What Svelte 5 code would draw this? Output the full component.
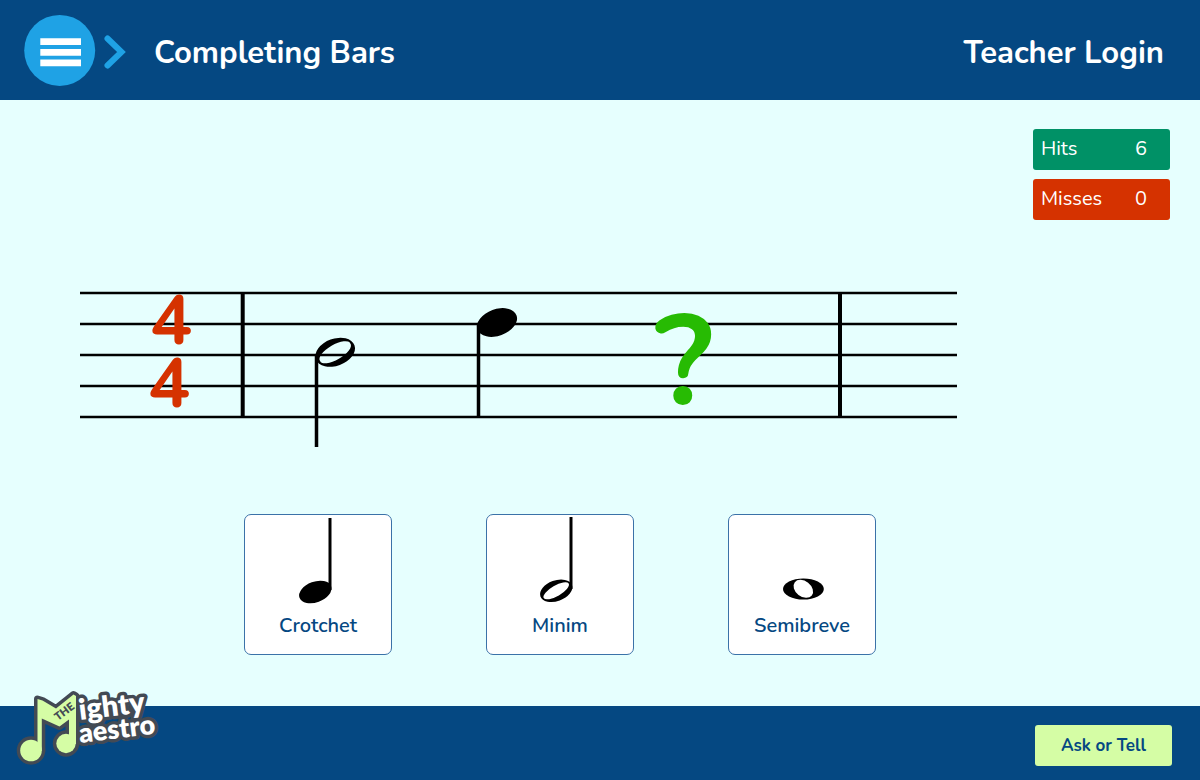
<script>
  const answers = [
    { name: 'Crotchet', kind: 'crotchet' },
    { name: 'Minim', kind: 'minim' },
    { name: 'Semibreve', kind: 'semibreve' }
  ];
  const lines = [3, 34, 65, 96, 127];
</script>

<div class="page">
  <header>
    <button class="menu" aria-label="Menu">
      <svg viewBox="0 0 104 72" aria-hidden="true">
        <circle cx="35.700" cy="36.400" r="35.500" fill="#1fa2e5" />
        <path d="M16.300 24.200h40.700v6.800h-40.700zM16.300 35h40.700v6.800h-40.700zM16.300 45.400h40.700v6.800h-40.700z" fill="#fff" />
        <path d="M83.500 24.500L97.500 38L83.500 51.500" fill="none" stroke="#1fa2e5" stroke-width="6" stroke-linecap="round" />
      </svg>
    </button>
    <h1>Completing Bars</h1>
    <a class="login" href="#login">Teacher Login</a>
  </header>

  <main>
    <dl class="score">
      <div class="hits"><dt>Hits</dt><dd>6</dd></div>
      <div class="misses"><dt>Misses</dt><dd>0</dd></div>
    </dl>

    <svg class="staff" viewBox="0 0 880 160" role="img" aria-label="Bar in four four time">
      <g stroke="#000" fill="none">
        {#each lines as y}
          <path d="M0 {y}H877" stroke-width="2.5" />
        {/each}
        <path d="M162.700 2V128M760 2V128" stroke-width="4" />
        <path d="M236.500 64V157M398.500 34V127" stroke-width="3.500" />
      </g>
      <path fill-rule="evenodd" transform="translate(255.200 62.300) rotate(-20)" d="M-20.500 0a20.500 13.500 0 1 0 41 0a20.500 13.500 0 1 0 -41 0zM-17.200 3a17.500 7 -10 1 0 34.400 -6a17.500 7 -10 1 0 -34.400 6z" />
      <ellipse cx="417" cy="32.500" rx="20.800" ry="13.300" transform="rotate(-20 417 32.500)" />
      <g class="signature" text-anchor="middle">
        <text x="91" y="54">4</text>
        <text x="89" y="117">4</text>
      </g>
      <text class="unknown" x="604" y="114" text-anchor="middle">?</text>
    </svg>

    <div class="answers">
      {#each answers as answer}
        <button class="answer">
          <svg viewBox="0 0 146 98" aria-hidden="true">
            {#if answer.kind === 'crotchet'}
              <path d="M83.500 3h3v72h-3z" />
              <ellipse cx="70.300" cy="77" rx="16.800" ry="10.300" transform="rotate(-20 70.300 77)" />
            {:else if answer.kind === 'minim'}
              <path d="M82.500 2h3v72h-3z" />
              <path fill-rule="evenodd" transform="translate(69.200 75.800) rotate(-20)" d="M-16.800 0a16.800 10.300 0 1 0 33.600 0a16.800 10.300 0 1 0 -33.600 0zM-14.200 2.500a14.400 5.300 -10 1 0 28.400 -5a14.400 5.300 -10 1 0 -28.400 5z" />
            {:else}
              <ellipse cx="74.400" cy="74" rx="20.400" ry="10.600" />
              <ellipse cx="74.300" cy="73.800" rx="10.800" ry="7.800" transform="rotate(38 74.300 73.800)" fill="#fff" />
            {/if}
          </svg>
          <span>{answer.name}</span>
        </button>
      {/each}
    </div>
  </main>

  <footer>
    <svg class="logo" viewBox="0 0 152 88" role="img" aria-label="The Mighty Maestro">
      <defs>
        <g id="beamed">
          <circle cx="17" cy="66.500" r="10.800" />
          <circle cx="52" cy="59.500" r="9.700" />
          <path d="M23.500 15L28.500 16.500L42 24.500L59.500 10.500L62 12V60H55V35.500L45.500 42.500L27.800 34.500V67H23.500z" />
        </g>
      </defs>
      <use href="#beamed" fill="#434a54" stroke="#434a54" stroke-width="7" stroke-linejoin="round" />
      <g class="words">
        <text transform="translate(66 36) rotate(-7)" font-size="29">ighty</text>
        <text transform="translate(66 59) rotate(-7)" font-size="27">aestro</text>
      </g>
      <use href="#beamed" fill="#d5fda5" />
      <text class="the" transform="translate(44 37) rotate(-37)">THE</text>
    </svg>
    <button class="ask">Ask or Tell</button>
  </footer>
</div>

<style>
  :global(body) { margin: 0; }
  .page {
    min-height: 100vh;
    display: flex;
    flex-direction: column;
    background: #e6fffe;
    font-family: Nunito, Lato, sans-serif;
  }
  button { font-family: inherit; cursor: pointer; }
  header {
    display: flex;
    align-items: center;
    box-sizing: border-box;
    min-height: 100px;
    padding: 0 36px 0 24px;
    background: #054882;
    color: #fff;
  }
  .menu { padding: 0; border: 0; background: none; }
  .menu svg { display: block; width: 104px; height: 72px; }
  h1, .login { font-size: 31px; line-height: 40px; font-weight: 700; margin: 6px 0 0; }
  h1 { margin-left: 26px; }
  .login { margin-left: auto; color: #fff; text-decoration: none; }
  main {
    flex: 1;
    display: grid;
    grid-template-columns: minmax(0, 1fr) 210px;
    align-content: start;
    padding: 29px 30px 51px 80px;
  }
  .score {
    grid-column: 2;
    justify-self: end;
    display: grid;
    gap: 9px;
    width: 137px;
    margin: 0 0 70px;
    color: #fff;
    font-size: 20px;
    line-height: 40px;
  }
  .score div { display: flex; height: 41px; padding: 0 8px; border-radius: 3px; }
  .hits { background: #009166; }
  .misses { background: #d53200; }
  dt { flex: 1; }
  dd { margin: 0; width: 27px; }
  .staff { grid-column: 1; display: block; width: 100%; overflow: visible; }
  .signature { font-size: 70px; font-weight: 700; fill: #d53200; }
  .unknown { font-size: 127px; font-weight: 700; fill: #27bb03; }
  .answers {
    grid-column: 1;
    display: flex;
    justify-content: center;
    gap: 94px;
    padding-left: 80px;
    margin-top: 64px;
  }
  .answer {
    box-sizing: border-box;
    width: 148px;
    height: 141px;
    padding: 0;
    border: 1px solid #3b72a8;
    border-radius: 7px;
    background: #fff;
    color: #054882;
    font-size: 20px;
    line-height: 26px;
    font-weight: 600;
  }
  .answer svg { display: block; width: 100%; }
  .answer span { display: block; height: 41px; }
  footer {
    display: flex;
    align-items: flex-start;
    justify-content: space-between;
    box-sizing: border-box;
    min-height: 74px;
    padding: 0 28px 0 14px;
    background: #054882;
  }
  .logo { width: 152px; height: 88px; margin: -22px 0 0; overflow: visible; }
  .words {
    font-family: Lato, sans-serif;
    font-weight: 800;
    fill: #fff;
    stroke: #434a54;
    stroke-width: 7;
    stroke-linejoin: round;
    paint-order: stroke;
  }
  .the { font-family: Lato, sans-serif; font-weight: 800; font-size: 11px; fill: #434a54; }
  .ask {
    width: 137px;
    height: 41px;
    margin-top: 19px;
    padding: 0;
    border: 0;
    border-radius: 3px;
    background: #d5fda5;
    color: #054882;
    font-size: 17px;
    font-weight: 700;
  }
</style>
